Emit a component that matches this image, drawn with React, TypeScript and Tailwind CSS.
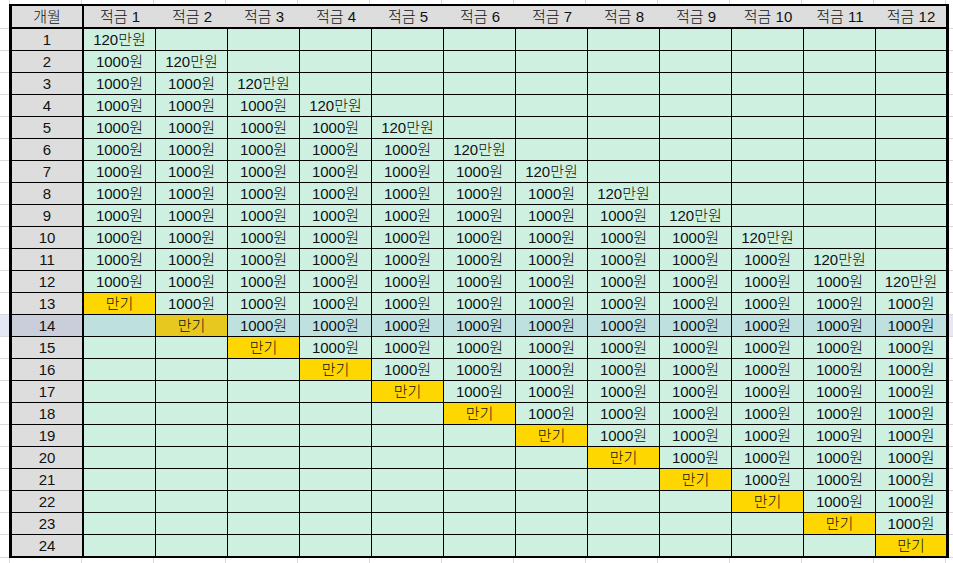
import React from 'react';

const COLS = 12;
const ROWS = 24;
const SELECTED = 14;

function cellValue(row: number, col: number) {
  if (row === col) return '120만원';
  if (row === col + 12) return '만기';
  if (row > col && row < col + 12) return '1000원';
  return '';
}

// gray gridline strip above / below the table
function GridStrip({ className }: { className: string }) {
  return (
    <div className={`flex ${className}`}>
      <div className="w-[10px] shrink-0 border-r border-[#d9d9d9]" />
      {Array.from({ length: COLS + 1 }).map((_, i) => (
        <div key={i} className="w-[72px] shrink-0 border-r border-[#d9d9d9]" />
      ))}
    </div>
  );
}

function HeaderLine() {
  return (
    <div className="flex h-[25px] shrink-0">
      <div className="w-[9px] shrink-0 border-b border-[#d9d9d9]" />
      <div className="flex border-t-2 border-b-2 border-l-[3px] border-r-[3px] border-black bg-[#dddddd]">
        <div className="w-[72px] border-r-2 border-black flex items-center justify-center">개월</div>
        {Array.from({ length: COLS }).map((_, i) => (
          <div
            key={i}
            className={`${i === COLS - 1 ? 'w-[70px]' : 'w-[72px]'} flex items-center justify-center`}
          >
            적금 {i + 1}
          </div>
        ))}
      </div>
      <div className="flex-1 border-b border-[#d9d9d9]" />
    </div>
  );
}

function BodyLine({ row }: { row: number }) {
  const last = row === ROWS;
  const sel = row === SELECTED;
  return (
    <div className={`flex shrink-0 ${last ? 'h-[23px]' : 'h-[22px]'} ${sel ? 'bg-[#e3e8f4]' : ''}`}>
      <div className="w-[9px] shrink-0 border-b border-[#d9d9d9]" />
      <div className={`flex border-l-[3px] border-r-[3px] border-black ${last ? 'border-b-2' : 'border-b'}`}>
        <div
          className={`w-[72px] border-r-2 border-black flex items-center justify-center ${sel ? 'bg-[#c9ceda]' : 'bg-[#dddddd]'}`}
        >
          {row}
        </div>
        {Array.from({ length: COLS }).map((_, i) => {
          const col = i + 1;
          const v = cellValue(row, col);
          const due = v === '만기';
          let bg = sel ? 'bg-[#bee0df]' : 'bg-[#cdf0e1]';
          if (due) bg = sel ? 'bg-[#e6c81e]' : 'bg-[#ffd700]';
          return (
            <div
              key={col}
              className={`${col === COLS ? 'w-[70px]' : 'w-[72px] border-r border-black'} ${bg} flex items-center justify-center`}
            >
              {v}
            </div>
          );
        })}
      </div>
      <div className="flex-1 border-b border-[#d9d9d9]" />
    </div>
  );
}

export default function App() {
  return (
    <div
      className="w-[953px] h-[563px] bg-white overflow-hidden flex flex-col text-[15px] font-light leading-none text-[#111]"
      style={{ fontFamily: '"Liberation Sans", "Noto Sans CJK KR", sans-serif' }}
    >
      <GridStrip className="h-[4px] shrink-0" />
      <HeaderLine />
      {Array.from({ length: ROWS }).map((_, i) => (
        <BodyLine key={i} row={i + 1} />
      ))}
      <GridStrip className="flex-1" />
    </div>
  );
}
